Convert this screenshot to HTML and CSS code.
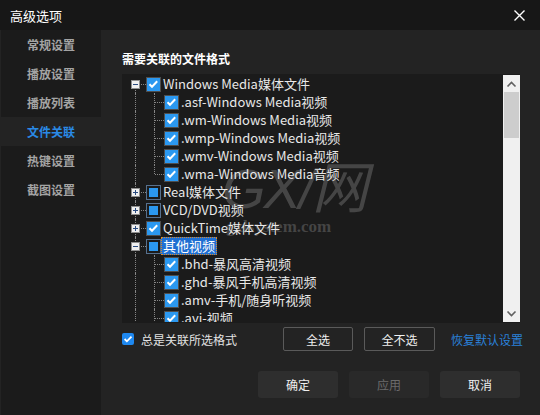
FILE: index.html
```html
<!DOCTYPE html>
<html lang="zh-CN">
<head>
<meta charset="utf-8">
<title>高级选项</title>
<link rel="stylesheet" href="styles.css">
</head>
<body>
<div class="dialog">
  <div class="titlebar">
    <span class="title">高级选项</span>
    <span class="close"><svg width="11" height="11" viewBox="0 0 11 11"><path d="M0.5 0.5 L10.5 10.5 M10.5 0.5 L0.5 10.5" stroke="#fff" stroke-width="1.4" fill="none"/></svg></span>
  </div>
  <div class="body">
    <nav class="sidebar">
      <div class="nav-item">常规设置</div>
      <div class="nav-item">播放设置</div>
      <div class="nav-item">播放列表</div>
      <div class="nav-item active">文件关联</div>
      <div class="nav-item">热键设置</div>
      <div class="nav-item">截图设置</div>
    </nav>
    <main class="main">
      <h2 class="heading">需要关联的文件格式</h2>
      <div class="tree">
        <div class="watermark">
          <div class="wm-big">GX/网</div>
          <div class="wm-small">gxlsystem.com</div>
        </div>
        <div class="tree-content">
          <div class="row">
            <span class="g g1 v start h"><span class="exp"></span></span>
            <span class="cb on"><svg viewBox="0 0 13 13"><path d="M2.5 6.2 L5 8.7 L10.2 3.3" stroke="#fff" stroke-width="2" fill="none"/></svg></span>
            <span class="lbl">Windows Media媒体文件</span>
          </div>
          <div class="row">
            <span class="g g1 v"></span><span class="g g2 v h"></span>
            <span class="cb on"><svg viewBox="0 0 13 13"><path d="M2.5 6.2 L5 8.7 L10.2 3.3" stroke="#fff" stroke-width="2" fill="none"/></svg></span>
            <span class="lbl">.asf-Windows Media视频</span>
          </div>
          <div class="row">
            <span class="g g1 v"></span><span class="g g2 v h"></span>
            <span class="cb on"><svg viewBox="0 0 13 13"><path d="M2.5 6.2 L5 8.7 L10.2 3.3" stroke="#fff" stroke-width="2" fill="none"/></svg></span>
            <span class="lbl">.wm-Windows Media视频</span>
          </div>
          <div class="row">
            <span class="g g1 v"></span><span class="g g2 v h"></span>
            <span class="cb on"><svg viewBox="0 0 13 13"><path d="M2.5 6.2 L5 8.7 L10.2 3.3" stroke="#fff" stroke-width="2" fill="none"/></svg></span>
            <span class="lbl">.wmp-Windows Media视频</span>
          </div>
          <div class="row">
            <span class="g g1 v"></span><span class="g g2 v h"></span>
            <span class="cb on"><svg viewBox="0 0 13 13"><path d="M2.5 6.2 L5 8.7 L10.2 3.3" stroke="#fff" stroke-width="2" fill="none"/></svg></span>
            <span class="lbl">.wmv-Windows Media视频</span>
          </div>
          <div class="row">
            <span class="g g1 v"></span><span class="g g2 v end h"></span>
            <span class="cb on"><svg viewBox="0 0 13 13"><path d="M2.5 6.2 L5 8.7 L10.2 3.3" stroke="#fff" stroke-width="2" fill="none"/></svg></span>
            <span class="lbl">.wma-Windows Media音频</span>
          </div>
          <div class="row">
            <span class="g g1 v h"><span class="exp plus"></span></span>
            <span class="cb ind"></span>
            <span class="lbl">Real媒体文件</span>
          </div>
          <div class="row">
            <span class="g g1 v h"><span class="exp plus"></span></span>
            <span class="cb ind"></span>
            <span class="lbl">VCD/DVD视频</span>
          </div>
          <div class="row">
            <span class="g g1 v h"><span class="exp plus"></span></span>
            <span class="cb on"><svg viewBox="0 0 13 13"><path d="M2.5 6.2 L5 8.7 L10.2 3.3" stroke="#fff" stroke-width="2" fill="none"/></svg></span>
            <span class="lbl">QuickTime媒体文件</span>
          </div>
          <div class="row">
            <span class="g g1 v h"><span class="exp"></span></span>
            <span class="cb ind"></span>
            <span class="lbl sel">其他视频</span>
          </div>
          <div class="row">
            <span class="g g1 v"></span><span class="g g2 v h"></span>
            <span class="cb on"><svg viewBox="0 0 13 13"><path d="M2.5 6.2 L5 8.7 L10.2 3.3" stroke="#fff" stroke-width="2" fill="none"/></svg></span>
            <span class="lbl">.bhd-暴风高清视频</span>
          </div>
          <div class="row">
            <span class="g g1 v"></span><span class="g g2 v h"></span>
            <span class="cb on"><svg viewBox="0 0 13 13"><path d="M2.5 6.2 L5 8.7 L10.2 3.3" stroke="#fff" stroke-width="2" fill="none"/></svg></span>
            <span class="lbl">.ghd-暴风手机高清视频</span>
          </div>
          <div class="row">
            <span class="g g1 v"></span><span class="g g2 v h"></span>
            <span class="cb on"><svg viewBox="0 0 13 13"><path d="M2.5 6.2 L5 8.7 L10.2 3.3" stroke="#fff" stroke-width="2" fill="none"/></svg></span>
            <span class="lbl">.amv-手机/随身听视频</span>
          </div>
          <div class="row">
            <span class="g g1 v"></span><span class="g g2 v h"></span>
            <span class="cb on"><svg viewBox="0 0 13 13"><path d="M2.5 6.2 L5 8.7 L10.2 3.3" stroke="#fff" stroke-width="2" fill="none"/></svg></span>
            <span class="lbl">.avi-视频</span>
          </div>
        </div>
        <div class="scrollbar">
          <div class="sb-btn"><svg width="17" height="17" viewBox="0 0 17 17"><polyline points="4.5,11.5 8.5,7.5 12.5,11.5" stroke="#606060" stroke-width="1.6" fill="none"/></svg></div>
          <div class="sb-track"><div class="sb-thumb"></div></div>
          <div class="sb-btn"><svg width="17" height="17" viewBox="0 0 17 17"><polyline points="4.5,6.5 8.5,10.5 12.5,6.5" stroke="#606060" stroke-width="1.6" fill="none"/></svg></div>
        </div>
      </div>
      <div class="options">
        <span class="chk"><svg viewBox="0 0 12 12"><path d="M2.6 6 L4.9 8.3 L9.5 3.6" stroke="#fff" stroke-width="1.8" fill="none"/></svg></span>
        <span class="opt-label">总是关联所选格式</span>
        <button class="btn-outline">全选</button>
        <button class="btn-outline">全不选</button>
        <span class="link">恢复默认设置</span>
      </div>
      <div class="footer">
        <button class="btn">确定</button>
        <button class="btn disabled">应用</button>
        <button class="btn">取消</button>
      </div>
    </main>
  </div>
</div>
</body>
</html>
```
FILE: styles.css
```css
* { box-sizing: border-box; margin: 0; padding: 0; }
body {
  margin: 0;
  background: #232323;
  font-family: "Noto Sans CJK SC", "Noto Sans", sans-serif;
}
.dialog {
  width: 540px;
  height: 415px;
  display: flex;
  flex-direction: column;
  background: #232323;
  overflow: hidden;
}
.titlebar {
  height: 30px;
  flex: none;
  background: #171717;
  display: flex;
  align-items: center;
  justify-content: space-between;
  padding: 0 15px 0 10px;
  color: #fff;
  font-size: 13px;
}
.close { display: flex; }
.body { flex: 1; display: flex; min-height: 0; }
.sidebar {
  width: 101px;
  flex: none;
  background: #1b1b1b;
  border-left: 1px solid #232323;
}
.nav-item {
  height: 29px;
  line-height: 29px;
  padding-left: 26px;
  font-size: 12px;
  font-weight: 700;
  color: #a4a4a4;
}
.nav-item.active { background: #232323; color: #2a8ae6; }
.main {
  flex: 1;
  display: flex;
  flex-direction: column;
  padding: 20px 20px 17px 21px;
}
.heading {
  font-size: 12px;
  font-weight: 700;
  line-height: 17px;
  height: 17px;
  color: #fff;
}
.tree {
  margin-top: 7px;
  width: 398px;
  height: 249px;
  flex: none;
  background: #1b1b1b;
  padding: 1px 0 1px 1px;
  display: flex;
  position: relative;
}
.tree-content { flex: 1; overflow: hidden; position: relative; }
.row {
  height: 18px;
  display: flex;
  align-items: center;
  font-size: 13px;
  color: #e8e8e8;
  white-space: nowrap;
}
.g { position: relative; align-self: stretch; flex: none; }
.g1 { width: 23px; }
.g2 { width: 18px; }
.v::before {
  content: "";
  position: absolute;
  top: 0;
  bottom: 0;
  border-left: 1px dotted #858585;
}
.g1.v::before { left: 12px; }
.g2.v::before { left: 8px; }
.v.start::before { top: 9px; }
.v.end::before { bottom: 9px; }
.h::after {
  content: "";
  position: absolute;
  right: 0;
  top: 9px;
  border-top: 1px dotted #858585;
}
.g1.h::after { left: 13px; }
.g2.h::after { left: 9px; }
.exp {
  position: absolute;
  left: 8px;
  top: 5px;
  width: 9px;
  height: 9px;
  border: 1px solid #8f8f8f;
  background: #f0f0f0;
  z-index: 1;
}
.exp::before {
  content: "";
  position: absolute;
  left: 1px;
  top: 3px;
  width: 5px;
  height: 1px;
  background: #2a4b80;
}
.exp.plus::after {
  content: "";
  position: absolute;
  left: 3px;
  top: 1px;
  width: 1px;
  height: 5px;
  background: #2a4b80;
}
.cb {
  width: 15px;
  height: 15px;
  flex: none;
  border: 1px solid #4e4e4e;
  background: #2b98f0;
  display: flex;
}
.cb svg { width: 13px; height: 13px; }
.cb.ind {
  background: #1b1b1b;
  border-color: #56708e;
  padding: 2px;
}
.cb.ind::before { content: ""; flex: 1; background: #2b98f0; }
.lbl {
  height: 18px;
  line-height: 16px;
  padding: 0 1px;
  border: 1px solid transparent;
}
.lbl.sel {
  background: #1f6fd2;
  border: 1px dotted #d98a2c;
  color: #fff;
}
.scrollbar {
  width: 17px;
  flex: none;
  background: #f0f0f0;
  display: flex;
  flex-direction: column;
  position: relative;
  z-index: 2;
}
.sb-btn { height: 17px; flex: none; display: flex; }
.sb-track { flex: 1; padding: 0 1px; }
.sb-thumb { height: 46px; background: #cdcdcd; }
.watermark {
  position: absolute;
  left: 100px;
  top: 86px;
  pointer-events: none;
  color: rgba(140, 140, 140, 0.38);
}
.wm-big {
  font-family: "Liberation Sans", sans-serif;
  font-size: 56px;
  font-style: italic;
  line-height: 58px;
  letter-spacing: -2px;
}
.wm-small {
  font-family: "Liberation Serif", serif;
  font-weight: 700;
  font-size: 17px;
  line-height: 18px;
  margin-left: 4px;
}
.options {
  margin-top: 4px;
  height: 24px;
  flex: none;
  display: flex;
  align-items: center;
  margin-right: -3px;
}
.chk {
  width: 12px;
  height: 12px;
  flex: none;
  border-radius: 2px;
  background: #1e88f0;
  display: flex;
}
.chk svg { width: 12px; height: 12px; }
.opt-label {
  flex: 1;
  margin-left: 7px;
  font-size: 12px;
  color: #e2e2e2;
}
.btn-outline {
  width: 70px;
  height: 24px;
  margin-left: 11px;
  border: 1px solid #5a5a5a;
  border-radius: 2px;
  background: transparent;
  color: #f0f0f0;
  font-size: 12px;
  font-family: inherit;
}
.btn-outline + .btn-outline { width: 71px; }
.link {
  margin-left: 16px;
  color: #2a80d8;
  font-size: 12px;
}
.footer {
  margin-top: 20px;
  height: 27px;
  flex: none;
  display: flex;
  justify-content: flex-end;
  gap: 11px;
}
.btn {
  width: 80px;
  height: 27px;
  border: none;
  border-radius: 3px;
  background: #2e2e2e;
  color: #f0f0f0;
  font-size: 12px;
  font-family: inherit;
}
.btn.disabled { background: #292929; color: #6b6b6b; }
```
